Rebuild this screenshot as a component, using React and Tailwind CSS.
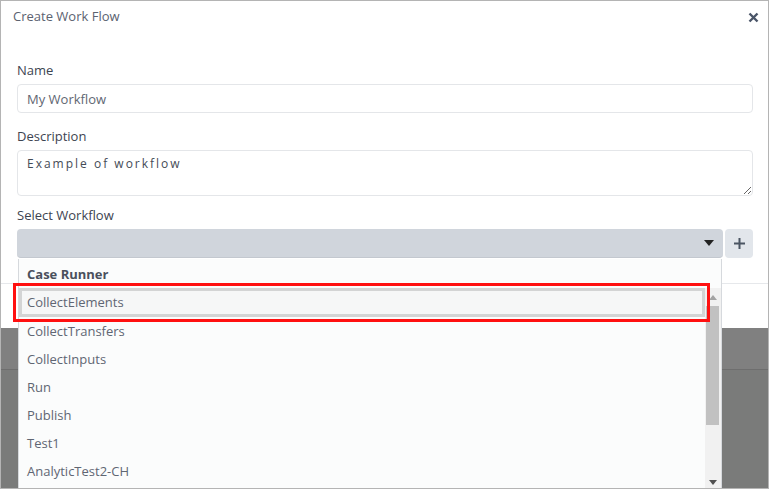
import React from "react";

const options = ["CollectTransfers", "CollectInputs", "Run", "Publish", "Test1", "AnalyticTest2-CH"];

export default function App() {
  return (
    <div className="relative w-[769px] h-[489px] overflow-hidden border border-[#b4b4b4] bg-[#7a7b7a] font-['Open_Sans',sans-serif]">
      {/* modal */}
      <div className="bg-white h-[327px] flex flex-col">
        <div className="h-[32px] pl-[12px] pr-[9px] flex items-center justify-between">
          <span className="text-[13px] text-[#5b6270]">Create Work Flow</span>
          <svg width="11" height="11" viewBox="0 0 11 11">
            <path d="M1.5 1.5 L9.5 9.5 M9.5 1.5 L1.5 9.5" stroke="#4a5568" strokeWidth="2.4" />
          </svg>
        </div>

        <div className="flex-1 pl-[16px] pr-[15px] pt-[27px]">
          <label className="block text-[13px] leading-[20px] text-[#3d4451] mb-[4px]">Name</label>
          <input
            readOnly
            value="My Workflow"
            className="block w-full h-[29px] border border-[#e4e6e9] rounded-[4px] px-[9px] text-[13px] text-[#5f6773] outline-none"
          />

          <label className="block mt-[13px] text-[13px] leading-[20px] text-[#3d4451] mb-[4px]">Description</label>
          <textarea
            readOnly
            defaultValue="Example of workflow"
            className="block w-full h-[46px] border border-[#e4e6e9] rounded-[4px] px-[9px] pt-[5px] text-[12px] leading-[16px] tracking-[2px] text-[#444b56] outline-none resize-y"
          />

          <label className="block mt-[9px] text-[13px] leading-[20px] text-[#3d4451] mb-[4px]">Select Workflow</label>
          <div className="flex h-[29px] gap-[2px]">
            <div className="flex-1 bg-[#d0d5dc] rounded-[4px] flex items-center justify-end pr-[9px] border-b border-[#c3c8cf]">
              <svg width="10" height="6" viewBox="0 0 10 6">
                <path d="M0 0 L10 0 L5 6 Z" fill="#222" />
              </svg>
            </div>
            <div className="w-[28px] bg-[#e2e6eb] rounded-[4px] flex items-center justify-center">
              <svg width="11" height="11" viewBox="0 0 11 11">
                <path d="M5.5 0 V11 M0 5.5 H11" stroke="#4b5563" strokeWidth="2" />
              </svg>
            </div>
          </div>
        </div>

        <div className="h-[45px] border-t border-[#e6e8eb]" />
      </div>
      <div className="h-[42px] bg-[#808080] border-b border-[#6e6e6e]" />

      {/* dropdown menu */}
      <div className="absolute left-[17px] top-[258px] w-[704px] h-[234px] bg-[#fbfcfc] border-l border-r border-[#d6d9dd] flex flex-col text-[13px]">
        <div className="h-[29px] shrink-0 pl-[8px] pt-[2px] flex items-center font-bold text-[#4a505c]">Case Runner</div>
        <div className="flex flex-1">
          <div className="flex-1">
            <div className="h-[29px] border-[3px] border-[#d3d4d4] bg-[#f6f7f7] pl-[5px] pt-[1px] flex items-center text-[#5f6673]">
              CollectElements
            </div>
            {options.map((o) => (
              <div key={o} className="h-[28px] pl-[8px] pt-[2px] flex items-center text-[#5f6673]">
                {o}
              </div>
            ))}
          </div>
          <div className="w-[16px] bg-[#f1f1f1] flex flex-col">
            <div className="h-[18px] flex items-center justify-center">
              <svg width="8" height="5" viewBox="0 0 8 5">
                <path d="M0 5 L8 5 L4 0 Z" fill="#a3a3a3" />
              </svg>
            </div>
            <div className="h-[119px] w-[13px] ml-[1px] bg-[#c1c1c1]" />
            <div className="flex-1" />
            <div className="h-[18px] flex items-start justify-center pt-[5px]">
              <svg width="8" height="5" viewBox="0 0 8 5">
                <path d="M0 0 L8 0 L4 5 Z" fill="#505050" />
              </svg>
            </div>
          </div>
        </div>
      </div>

      {/* annotation */}
      <div className="absolute left-[12px] top-[282px] w-[697px] h-[39px] border-[3px] border-[#ff1010]" />
    </div>
  );
}
